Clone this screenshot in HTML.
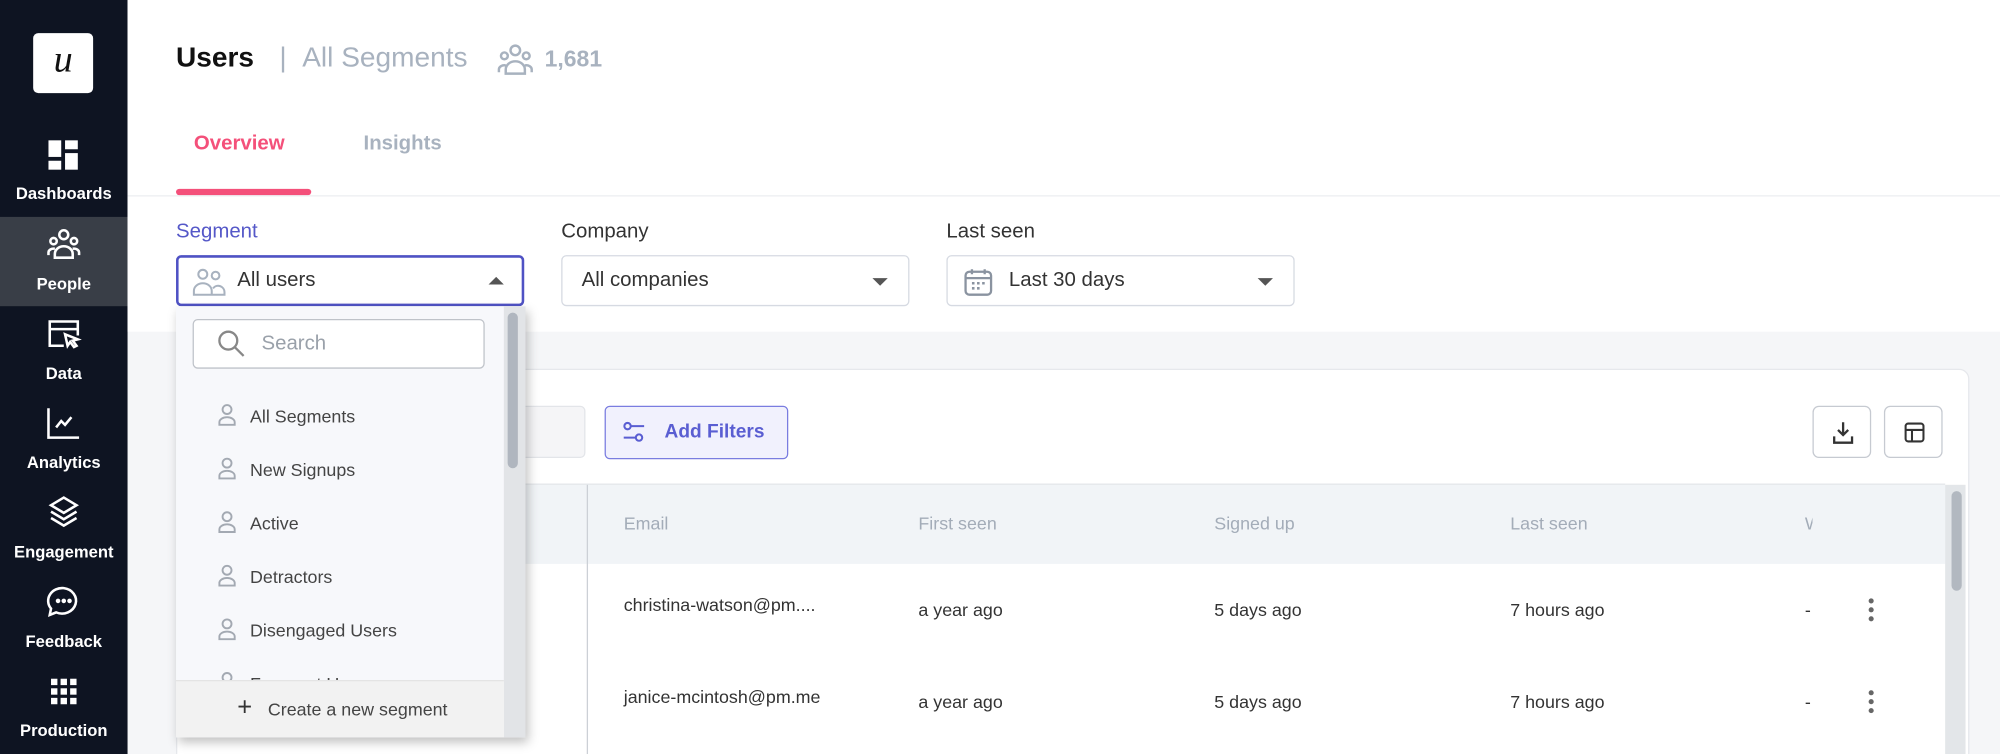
<!DOCTYPE html>
<html><head><meta charset="utf-8"><style>
*{box-sizing:border-box;margin:0;padding:0}
html,body{width:2000px;height:754px;overflow:hidden;background:#f5f6f8}
#w{position:absolute;left:0;top:0;width:1568px;height:591px;transform:scale(1.27551,1.2758);transform-origin:0 0;font-family:"Liberation Sans",sans-serif;background:#f5f6f8;overflow:hidden}
.a{position:absolute}
.side{left:0;top:0;width:100px;height:591px;background:#0e1422}
.logo{left:26px;top:26px;width:47px;height:47px;background:#fff;border-radius:4px;font:italic 30px "Liberation Serif",serif;color:#111;text-align:center;line-height:42px}
.nav{left:0;width:100px;height:70px;color:#fff;font-size:13px;font-weight:bold;text-align:center}
.nav svg{position:absolute;left:36px;top:8px}
.nav span{position:absolute;left:0;right:0;top:45px}
.top{left:100px;top:0;width:1468px;height:260px;background:#fff}
.lbl{font-size:16px;top:173px}
.dd{top:200px;height:40px;border:1px solid #d6dae2;border-radius:4px;background:#fff;font-size:16px;color:#333;line-height:38px}
.car{position:absolute;right:16px;top:17px;width:0;height:0;border-left:6px solid transparent;border-right:6px solid transparent;border-top:6px solid #555}
.th{top:402px;font-size:14px;color:#a3acb8}
.td{font-size:14px;color:#333}
.kb{width:4px;height:4px;border-radius:2px;background:#666;left:1465px}
.it{left:196px;font-size:14px;color:#444}
.ic{left:170px}
</style></head><body><div id="w">
<div class="a side"></div>
<div class="a logo">u</div>
<div class="a nav" style="top:100px"><svg width="28" height="28" viewBox="0 0 28 28" fill="#fff"><rect x="2" y="2" width="10" height="13"/><rect x="15" y="2" width="10" height="7"/><rect x="2" y="18" width="10" height="7"/><rect x="15" y="12" width="10" height="13"/></svg><span style="top:44px">Dashboards</span></div>
<div class="a nav" style="top:170px;background:#393e47"><svg width="28" height="28" viewBox="0 0 28 28" fill="none" stroke="#fff" stroke-width="2"><circle cx="14" cy="6" r="3.5"/><circle cx="6" cy="11" r="2.5"/><circle cx="22" cy="11" r="2.5"/><path d="M7 24v-3a7 6 0 0 1 14 0v3zM2 22v-2a4 3 0 0 1 5-3M26 22v-2a4 3 0 0 0-5-3"/></svg><span>People</span></div>
<div class="a nav" style="top:240px"><svg width="28" height="28" viewBox="0 0 28 28" fill="none" stroke="#fff" stroke-width="2"><path d="M14 23H3V4h22v11M3 10h22"/><path d="M15 14l10 4-4 1 3 4-2 1-3-4-2 3z"/></svg><span>Data</span></div>
<div class="a nav" style="top:310px"><svg width="28" height="28" viewBox="0 0 28 28" fill="none" stroke="#fff" stroke-width="2"><path d="M2 2v23h24M8 17l4-5 3 3 5-6"/></svg><span>Analytics</span></div>
<div class="a nav" style="top:380px"><svg width="28" height="28" viewBox="0 0 28 28" fill="none" stroke="#fff" stroke-width="2"><path d="M14 2l10 6-10 6-10-6zM4 13l10 6 10-6M4 18l10 6 10-6"/></svg><span>Engagement</span></div>
<div class="a nav" style="top:450px"><svg width="28" height="28" viewBox="0 0 28 28" fill="none" stroke="#fff" stroke-width="2"><path d="M14 3a11 10 0 1 1-6 19l-5 2 1-5A11 10 0 0 1 14 3z"/><circle cx="9.5" cy="13" r=".8" fill="#fff"/><circle cx="14" cy="13" r=".8" fill="#fff"/><circle cx="18.5" cy="13" r=".8" fill="#fff"/></svg><span>Feedback</span></div>
<div class="a nav" style="top:520px"><svg width="28" height="28" viewBox="0 0 28 28" fill="#fff"><rect x="4" y="4" width="5" height="5"/><rect x="11.5" y="4" width="5" height="5"/><rect x="19" y="4" width="5" height="5"/><rect x="4" y="11.5" width="5" height="5"/><rect x="11.5" y="11.5" width="5" height="5"/><rect x="19" y="11.5" width="5" height="5"/><rect x="4" y="19" width="5" height="5"/><rect x="11.5" y="19" width="5" height="5"/><rect x="19" y="19" width="5" height="5"/></svg><span>Production</span></div>

<div class="a top"></div>
<div class="a" style="left:138px;top:32px;font-size:22px;font-weight:bold;color:#111">Users</div>
<div class="a" style="left:219px;top:32px;font-size:22px;color:#a8b2bf">| &nbsp;All Segments</div>
<svg class="a" style="left:389px;top:34px" width="30" height="26" viewBox="0 0 28 24" fill="none" stroke="#a8b2bf" stroke-width="1.8"><circle cx="14" cy="5" r="3.5"/><circle cx="6" cy="9" r="2.5"/><circle cx="22" cy="9" r="2.5"/><path d="M7 22v-3a7 6 0 0 1 14 0v3zM2 21v-2a4 3 0 0 1 5-3M26 21v-2a4 3 0 0 0-5-3"/></svg>
<div class="a" style="left:427px;top:36px;font-size:18px;font-weight:bold;color:#a8b2bf">1,681</div>
<div class="a" style="left:152px;top:104px;font-size:16px;font-weight:bold;color:#f4507a">Overview</div>
<div class="a" style="left:285px;top:104px;font-size:16px;font-weight:bold;color:#a8b2bf">Insights</div>
<div class="a" style="left:138px;top:148px;width:106px;height:5px;border-radius:3px;background:#f4507a"></div>
<div class="a" style="left:100px;top:153px;width:1468px;height:1px;background:#eceef1"></div>

<div class="a lbl" style="left:138px;color:#5558c8">Segment</div>
<div class="a lbl" style="left:440px;color:#333">Company</div>
<div class="a lbl" style="left:742px;color:#333">Last seen</div>
<div class="a dd" style="left:138px;width:273px;border:2px solid #4f52c4;line-height:36px;padding-left:46px">All users<div class="car" style="border-top:0;border-bottom:6px solid #555;top:15px;right:14px"></div>
<svg class="a" style="left:11px;top:8px" width="26" height="22" viewBox="0 0 26 22" fill="none" stroke="#a8b2bf" stroke-width="1.6"><circle cx="8" cy="5" r="3.5"/><circle cx="18" cy="6" r="3"/><path d="M1 21v-3a7 6 0 0 1 14 0v3zM15 21h10v-2a5 5 0 0 0-9-3"/></svg></div>
<div class="a dd" style="left:440px;width:273px;padding-left:15px">All companies<div class="car"></div></div>
<div class="a dd" style="left:742px;width:273px;padding-left:48px">Last 30 days<div class="car"></div>
<svg class="a" style="left:12px;top:8px" width="24" height="24" viewBox="0 0 24 24" fill="none" stroke="#8a93a0" stroke-width="1.8"><rect x="2" y="4" width="20" height="18" rx="3"/><path d="M2 9h20M7 2v4M17 2v4"/><path d="M7 13h2M11 13h2M15 13h2M7 17h2M11 17h2" stroke-width="2"/></svg></div>

<div class="a" style="left:138px;top:289px;width:1406px;height:320px;background:#fff;border:1px solid #e6e8ec;border-radius:8px"></div>
<div class="a" style="left:380px;top:318px;width:79px;height:41px;background:#f5f5f7;border:1px solid #e3e5e9;border-radius:4px"></div>
<div class="a" style="left:474px;top:318px;width:144px;height:42px;background:#f1f1fd;border:1.5px solid #7a7de0;border-radius:4px;color:#5a5ed2;font-size:15px;font-weight:bold;line-height:39px;padding-left:46px">Add Filters
<svg class="a" style="left:12px;top:10px" width="20" height="20" viewBox="0 0 20 20" fill="none" stroke="#5a5ed2" stroke-width="1.6"><circle cx="5" cy="5" r="2.5"/><path d="M8 5h10M2 14h9"/><circle cx="14" cy="14" r="2.5"/></svg></div>
<div class="a" style="left:1421px;top:318px;width:46px;height:41px;border:1px solid #c6cad1;border-radius:5px"><svg class="a" style="left:13px;top:10px" width="20" height="20" viewBox="0 0 20 20" fill="none" stroke="#333" stroke-width="1.8"><path d="M10 2v10M6 8l4 4 4-4M3 13v5h14v-5"/></svg></div>
<div class="a" style="left:1477px;top:318px;width:46px;height:41px;border:1px solid #c6cad1;border-radius:5px"><svg class="a" style="left:14px;top:11px" width="18" height="18" viewBox="0 0 18 18" fill="none" stroke="#333" stroke-width="1.6"><rect x="2" y="2" width="14" height="14" rx="2"/><path d="M2 7h14M7 7v9"/></svg></div>

<div class="a" style="left:139px;top:379px;width:1386px;height:63px;background:#f1f4f7;border-top:1px solid #e3e6ea"></div>
<div class="a" style="left:460px;top:380px;width:1px;height:211px;background:#ccd0d6"></div>
<div class="a" style="left:1525px;top:380px;width:16px;height:211px;background:#e3e6e9"></div>
<div class="a" style="left:1530px;top:385px;width:8px;height:78px;border-radius:4px;background:#b2b8c0"></div>
<div class="a th" style="left:489px">Email</div>
<div class="a th" style="left:720px">First seen</div>
<div class="a th" style="left:952px">Signed up</div>
<div class="a th" style="left:1184px">Last seen</div>
<div class="a th" style="left:1415px;width:6px;overflow:hidden">W</div>
<div class="a td" style="left:489px;top:466px">christina-watson@pm....</div>
<div class="a td" style="left:720px;top:470px">a year ago</div>
<div class="a td" style="left:952px;top:470px">5 days ago</div>
<div class="a td" style="left:1184px;top:470px">7 hours ago</div>
<div class="a td" style="left:1415px;top:470px">-</div>
<div class="a kb" style="top:469px"></div><div class="a kb" style="top:476px"></div><div class="a kb" style="top:483px"></div>
<div class="a td" style="left:489px;top:538px">janice-mcintosh@pm.me</div>
<div class="a td" style="left:720px;top:542px">a year ago</div>
<div class="a td" style="left:952px;top:542px">5 days ago</div>
<div class="a td" style="left:1184px;top:542px">7 hours ago</div>
<div class="a td" style="left:1415px;top:542px">-</div>
<div class="a kb" style="top:541px"></div><div class="a kb" style="top:548px"></div><div class="a kb" style="top:555px"></div>

<div class="a" style="left:138px;top:240px;width:274px;height:338px;background:#f7f8fb;box-shadow:2px 4px 8px rgba(0,0,0,.25);overflow:hidden">
<div class="a" style="left:257px;top:0;width:17px;height:338px;background:#e2e4e7"></div>
<div class="a" style="left:260px;top:5px;width:8px;height:122px;border-radius:4px;background:#b0b6bf"></div>
<div class="a" style="left:13px;top:10px;width:229px;height:39px;background:#fff;border:1px solid #bfc3c9;border-radius:4px;font-size:16px;color:#9aa1aa;line-height:37px;padding-left:53px">Search
<svg class="a" style="left:18px;top:7px" width="24" height="24" viewBox="0 0 24 24" fill="none" stroke="#888" stroke-width="1.8"><circle cx="9" cy="9" r="7"/><path d="M14 14l7 7"/></svg></div>
<div class="a it" style="left:58px;top:288px">Frequent Users</div>
<svg class="a" style="left:32px;top:286px" width="16" height="18" viewBox="0 0 16 18" fill="none" stroke="#a3a9b2" stroke-width="1.5"><circle cx="8" cy="5" r="3.5"/></svg>
<div class="a" style="left:0;top:293px;width:257px;height:45px;background:#f2f2f2;border-top:1px solid #e4e4e4;font-size:14px;color:#444;line-height:44px;padding-left:72px">Create a new segment<span class="a" style="left:48px;top:-1px;font-size:20px;color:#333">+</span></div>
</div>
<div class="a it" style="top:318px">All Segments</div>
<div class="a it" style="top:360px">New Signups</div>
<div class="a it" style="top:402px">Active</div>
<div class="a it" style="top:444px">Detractors</div>
<div class="a it" style="top:486px">Disengaged Users</div>
<svg class="a ic" style="top:316px" width="16" height="18" viewBox="0 0 16 18" fill="none" stroke="#a3a9b2" stroke-width="1.5"><circle cx="8" cy="5" r="3.5"/><path d="M2 17v-2a6 4 0 0 1 12 0v2z"/></svg>
<svg class="a ic" style="top:358px" width="16" height="18" viewBox="0 0 16 18" fill="none" stroke="#a3a9b2" stroke-width="1.5"><circle cx="8" cy="5" r="3.5"/><path d="M2 17v-2a6 4 0 0 1 12 0v2z"/></svg>
<svg class="a ic" style="top:400px" width="16" height="18" viewBox="0 0 16 18" fill="none" stroke="#a3a9b2" stroke-width="1.5"><circle cx="8" cy="5" r="3.5"/><path d="M2 17v-2a6 4 0 0 1 12 0v2z"/></svg>
<svg class="a ic" style="top:442px" width="16" height="18" viewBox="0 0 16 18" fill="none" stroke="#a3a9b2" stroke-width="1.5"><circle cx="8" cy="5" r="3.5"/><path d="M2 17v-2a6 4 0 0 1 12 0v2z"/></svg>
<svg class="a ic" style="top:484px" width="16" height="18" viewBox="0 0 16 18" fill="none" stroke="#a3a9b2" stroke-width="1.5"><circle cx="8" cy="5" r="3.5"/><path d="M2 17v-2a6 4 0 0 1 12 0v2z"/></svg>
</div></body></html>
